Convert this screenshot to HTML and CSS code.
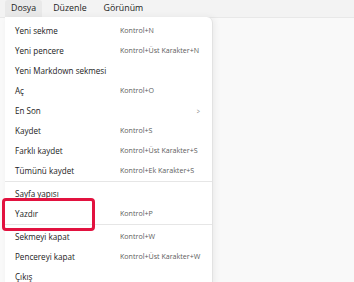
FILE: index.html
```html
<!DOCTYPE html>
<html lang="tr">
<head>
    <meta charset="UTF-8">
    <title>Not Defteri</title>
    <link rel="stylesheet" href="styles.css">
</head>
<body>
    <!-- Menu bar -->
    <div class="menubar">
        <span class="menubar-item active">Dosya</span>
        <span class="menubar-item">Düzenle</span>
        <span class="menubar-item">Görünüm</span>
    </div>

    <div class="workspace">
        <div class="menu">
            <div class="item"><span>Yeni sekme</span><span class="key">Kontrol+N</span></div>
            <div class="item"><span>Yeni pencere</span><span class="key">Kontrol+Üst Karakter+N</span></div>
            <div class="item"><span>Yeni Markdown sekmesi</span></div>
            <div class="item"><span>Aç</span><span class="key">Kontrol+O</span></div>
            <div class="item"><span>En Son</span><span class="chevron">&gt;</span></div>
            <div class="item"><span>Kaydet</span><span class="key">Kontrol+S</span></div>
            <div class="item"><span>Farklı kaydet</span><span class="key">Kontrol+Üst Karakter+S</span></div>
            <div class="item"><span>Tümünü kaydet</span><span class="key">Kontrol+Ek Karakter+S</span></div>
            <div class="sep"></div>
            <div class="item"><span>Sayfa yapısı</span></div>
            <div class="item"><span>Yazdır</span><span class="key">Kontrol+P</span></div>
            <div class="sep"></div>
            <div class="item"><span>Sekmeyi kapat</span><span class="key">Kontrol+W</span></div>
            <div class="item"><span>Pencereyi kapat</span><span class="key">Kontrol+Üst Karakter+W</span></div>
            <div class="item"><span>Çıkış</span></div>

            <!-- highlight around Yazdır -->
            <div class="highlight"></div>
        </div>
    </div>
</body>
</html>
```

FILE: styles.css
```css
body {
    margin: 0;
    width: 354px;
    height: 282px;
    overflow: hidden;
    background: #f9f9f9;
    font-family: "Open Sans", "Noto Sans", sans-serif;
    color: #222;
}
.menubar {
    height: 17px;
    background: #f3f3f3;
    border-bottom: 1px solid #e8e8e8;
    display: flex;
    padding-left: 5px;
    font-size: 8.8px;
}
.menubar-item {
    padding: 0 6px;
    line-height: 17px;
    margin-right: 5px;
}
.menubar-item.active {
    background: #e9e9e9;
    border-radius: 3px 3px 0 0;
}
.workspace {
    padding-left: 5px;
}
.menu {
    position: relative;
    width: 207px;
    margin-top: -1px;
    padding-top: 3px;
    background: #fff;
    border-radius: 0 6px 0 0;
    border-right: 1px solid #e2e2e2;
    box-shadow: 2px 0 6px rgba(0, 0, 0, 0.06);
}
.item {
    display: flex;
    align-items: center;
    height: 20px;
    padding-left: 10px;
    font-size: 8.1px;
}
.item > span:first-child {
    width: 105px;
    white-space: nowrap;
}
.key {
    font-size: 7.1px;
    color: #5c5c5c;
    white-space: nowrap;
}
.chevron {
    margin-left: auto;
    margin-right: 11px;
    font-size: 8px;
    color: #777;
    transform: scaleX(0.7);
}
.sep {
    height: 1px;
    background: #e6e6e6;
    margin: 1px 0;
}
.highlight {
    position: absolute;
    left: -3px;
    top: 181px;
    width: 87px;
    height: 27px;
    border: 3px solid #e2123f;
    border-radius: 4px;
}
```
